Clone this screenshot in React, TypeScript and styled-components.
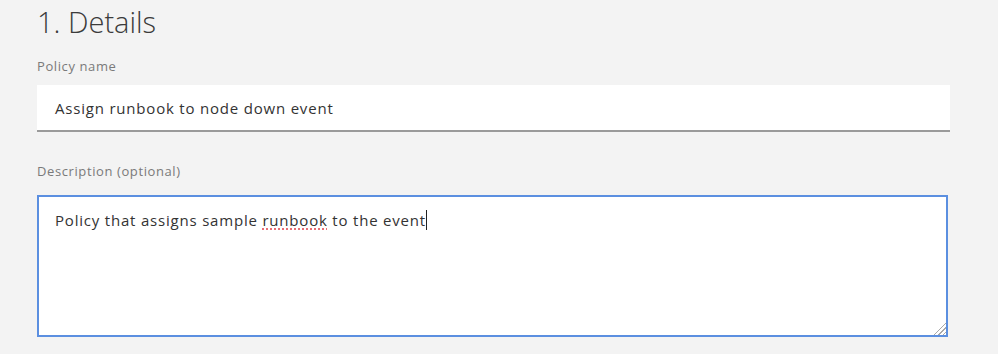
import styled, {createGlobalStyle} from "styled-components";

const GlobalStyle = createGlobalStyle`
	body {
		margin: 0;
		background: #f3f3f3;
		font-family: "Open Sans", "Noto Sans", sans-serif;
		color: #3a3a3a;
	}
`;

export default function App() {
	return (
		<Page>
			<GlobalStyle/>
			<Title>1. Details</Title>

			<Field gap={11}>
				<Label>Policy name</Label>
				<TextInput>Assign runbook to node down event</TextInput>
			</Field>

			<Field gap={16}>
				<Label>Description (optional)</Label>
				<TextArea>
					Policy that assigns sample <Misspelled>runbook</Misspelled> to the event
					<Caret/>
					<ResizeHandle/>
				</TextArea>
			</Field>
		</Page>
	);
}

const Page = styled.div`
	padding: 4px 48px 0 37px;
	height: 354px;
	box-sizing: border-box;
	display: flex;
	flex-direction: column;
`;

const Title = styled.h1`
	margin: 0 0 18px;
	font-size: 29px;
	font-weight: 300;
	line-height: 36px;
	color: #3b3b3b;
`;

const Field = styled.div<{gap: number}>`
	display: flex;
	flex-direction: column;
	gap: ${p => p.gap}px;
	margin-bottom: 31px;
`;

const Label = styled.label`
	font-size: 13px;
	line-height: 16px;
	letter-spacing: 0.6px;
	color: #7a7a7a;
`;

const TextInput = styled.div`
	height: 45px;
	background: #fff;
	border-bottom: 2px solid #9a9a9a;
	padding: 0 18px;
	display: flex;
	align-items: center;
	font-size: 15px;
	letter-spacing: 0.8px;
	color: #333;
`;

const TextArea = styled.div`
	position: relative;
	height: 142px;
	box-sizing: border-box;
	margin-right: 2px;
	background: #fff;
	border: 2px solid #5b8fe0;
	padding: 13px 16px;
	font-size: 15px;
	line-height: 20px;
	letter-spacing: 0.8px;
	color: #333;
`;

const Misspelled = styled.span`
	text-decoration: underline dotted #e0404a;
	text-underline-offset: 3px;
`;

const Caret = styled.span`
	display: inline-block;
	width: 1px;
	height: 20px;
	vertical-align: -4px;
	background: #222;
`;

const ResizeHandle = styled.span`
	position: absolute;
	right: 0;
	bottom: 0;
	width: 14px;
	height: 14px;
	background: repeating-linear-gradient(
		135deg,
		transparent 0 2px,
		#a8a8a8 2px 3px
	);
	clip-path: polygon(100% 0, 100% 100%, 0 100%);
`;
